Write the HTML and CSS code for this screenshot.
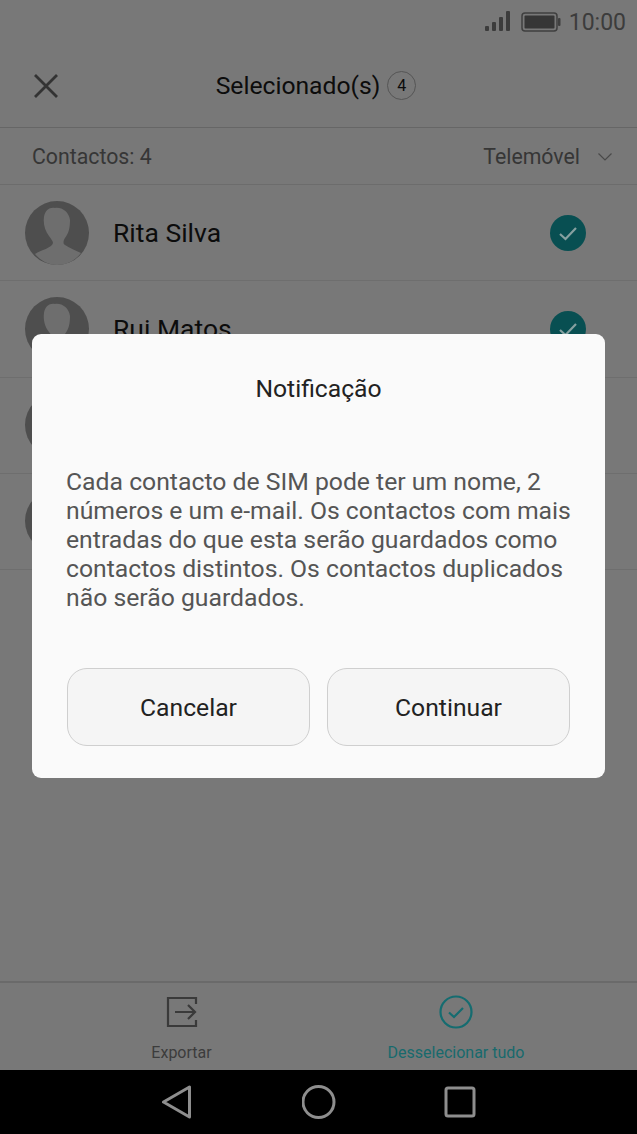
FILE: index.html
```html
<!DOCTYPE html>
<html lang="pt">
    <head>
        <meta charset="UTF-8" />
        <title>Selecionado(s)</title>
        <link rel="stylesheet" href="styles.css">
    </head>
    <body>
        <div class="screen">
            <div class="status">
                <svg class="signal" width="28" height="22" viewBox="0 0 28 22">
                    <rect x="1" y="16" width="4" height="5" rx="1" />
                    <rect x="8" y="12" width="4" height="9" rx="1" />
                    <rect x="15" y="7" width="4" height="14" rx="1" />
                    <rect x="22" y="1" width="4" height="20" rx="1" />
                </svg>
                <svg class="battery" width="40" height="20" viewBox="0 0 40 20">
                    <rect x="1" y="1" width="35" height="18" rx="3" fill="none" stroke="#3f3f3f" stroke-width="1.5" />
                    <rect x="3.5" y="3.5" width="30" height="13" rx="1" fill="#363636" />
                    <rect x="37" y="6" width="2.5" height="8" rx="1" fill="#3f3f3f" />
                </svg>
                <span class="time">10:00</span>
            </div>

            <div class="topbar">
                <svg class="close" width="26" height="26" viewBox="0 0 26 26">
                    <path d="M2 2 L24 24 M24 2 L2 24" />
                </svg>
                <span class="title">Selecionado(s)</span>
                <span class="count">4</span>
            </div>

            <div class="filter">
                <span>Contactos: 4</span>
                <span class="filter-type">
                    Telemóvel
                    <svg width="16" height="10" viewBox="0 0 16 10">
                        <path d="M1.5 1.5 L8 8 L14.5 1.5" />
                    </svg>
                </span>
            </div>

            <ul class="contacts">
                <li class="contact">
                    <svg class="avatar" viewBox="0 0 64 64">
                        <circle cx="32" cy="32" r="32" class="avatar-bg" />
                        <path class="avatar-fg" d="M10 53 C16 49 27 47 28 42 C28 40 26 38 24 35 C20 30 18 23 19 16 C20 9 25 6 30 7 C37 6 44 11 45 19 C45 26 44 32 40 37 C38 40 38 43 40 44 C44 47 50 49 56 52 C50 60 41 64 32 64 C24 64 16 60 10 53 Z" />
                    </svg>
                    <span class="name">Rita Silva</span>
                    <svg class="tick" viewBox="0 0 36 36">
                        <circle cx="18" cy="18" r="18" class="tick-bg" />
                        <path class="tick-mark" d="M10 19 L15.5 24 L26 13" />
                    </svg>
                </li>
                <li class="contact">
                    <svg class="avatar" viewBox="0 0 64 64">
                        <circle cx="32" cy="32" r="32" class="avatar-bg" />
                        <path class="avatar-fg" d="M10 53 C16 49 27 47 28 42 C28 40 26 38 24 35 C20 30 18 23 19 16 C20 9 25 6 30 7 C37 6 44 11 45 19 C45 26 44 32 40 37 C38 40 38 43 40 44 C44 47 50 49 56 52 C50 60 41 64 32 64 C24 64 16 60 10 53 Z" />
                    </svg>
                    <span class="name">Rui Matos</span>
                    <svg class="tick" viewBox="0 0 36 36">
                        <circle cx="18" cy="18" r="18" class="tick-bg" />
                        <path class="tick-mark" d="M10 19 L15.5 24 L26 13" />
                    </svg>
                </li>
                <li class="contact">
                    <svg class="avatar" viewBox="0 0 64 64">
                        <circle cx="32" cy="32" r="32" class="avatar-bg" />
                    </svg>
                </li>
                <li class="contact">
                    <svg class="avatar" viewBox="0 0 64 64">
                        <circle cx="32" cy="32" r="32" class="avatar-bg" />
                    </svg>
                </li>
            </ul>

            <div class="actions">
                <div class="action">
                    <svg width="34" height="34" viewBox="0 0 34 34">
                        <path class="export" d="M31 9 V3 H3 V31 H31 V25 M10 17 H30 M23 10 L30 17 L23 24" />
                    </svg>
                    <span>Exportar</span>
                </div>
                <div class="action action-on">
                    <svg width="34" height="34" viewBox="0 0 34 34">
                        <circle class="deselect" cx="17" cy="17" r="15.5" />
                        <path class="deselect" d="M10 17.5 L15 22 L24 13" />
                    </svg>
                    <span>Desselecionar tudo</span>
                </div>
            </div>

            <div class="nav">
                <svg width="34" height="34" viewBox="0 0 34 34">
                    <path d="M29.5 2 V32 L3.5 17 Z" />
                </svg>
                <svg width="34" height="34" viewBox="0 0 34 34">
                    <circle cx="16.5" cy="17" r="15.5" />
                </svg>
                <svg width="34" height="34" viewBox="0 0 34 34">
                    <rect x="2" y="3" width="28" height="28" rx="2" />
                </svg>
            </div>

            <div class="dialog">
                <h1>Notificação</h1>
                <p>Cada contacto de SIM pode ter um nome, 2 números e um e-mail. Os contactos com mais entradas do que esta serão guardados como contactos distintos. Os contactos duplicados não serão guardados.</p>
                <div class="buttons">
                    <button>Cancelar</button>
                    <button>Continuar</button>
                </div>
            </div>
        </div>
    </body>
</html>
```

FILE: styles.css
```css
* {
    box-sizing: border-box;
}

body {
    margin: 0;
    font-family: 'Roboto', 'Liberation Sans', sans-serif;
    background: #787878;
}

.screen {
    position: relative;
    display: flex;
    flex-direction: column;
    width: 637px;
    height: 1134px;
    overflow: hidden;
    background: #787878;
}

.status {
    display: flex;
    align-items: center;
    justify-content: flex-end;
    height: 44px;
    padding-right: 11px;
    color: #3c3c3c;
    font-size: 23px;
}

.signal {
    margin-right: 9px;
    margin-top: -3px;
    fill: #3c3c3c;
}

.battery {
    margin-right: 8px;
}

.topbar {
    display: flex;
    align-items: center;
    justify-content: center;
    position: relative;
    height: 84px;
    padding-right: 5px;
    border-bottom: 1px solid #666;
    color: #0c0c0c;
    font-size: 24.7px;
}

.close {
    position: absolute;
    left: 33px;
    top: 29px;
    fill: none;
    stroke: #333;
    stroke-width: 2.8;
}

.title {
    margin-right: 7px;
}

.count {
    display: flex;
    align-items: center;
    justify-content: center;
    width: 29px;
    height: 29px;
    border: 1px solid #555;
    border-radius: 50%;
    font-size: 16px;
}

.filter {
    display: flex;
    align-items: center;
    justify-content: space-between;
    height: 57px;
    padding: 1px 24px 0 32px;
    border-bottom: 1px solid #6c6c6c;
    color: #363636;
    font-size: 21.3px;
}

.filter-type {
    display: flex;
    align-items: center;
    gap: 17px;
}

.filter-type path {
    fill: none;
    stroke: #4a4a4a;
    stroke-width: 1.2;
}

.contacts {
    margin: 0;
    padding: 0;
    list-style: none;
}

.contact {
    display: flex;
    align-items: center;
    height: 96.25px;
    padding: 0 51px 0 25px;
    border-bottom: 1px solid #6e6e6e;
}

.avatar {
    flex: none;
    width: 64px;
    height: 64px;
}

.avatar-bg {
    fill: #4e4e4e;
}

.avatar-fg {
    fill: #6e6e6e;
}

.name {
    margin-left: 24px;
    color: #0c0c0c;
    font-size: 26.5px;
}

.tick {
    flex: none;
    width: 36px;
    height: 36px;
    margin-left: auto;
}

.tick-bg {
    fill: #084f52;
}

.tick-mark {
    fill: none;
    stroke: #86a0a0;
    stroke-width: 2.2;
}

.actions {
    display: grid;
    grid-template-columns: 275px 274px;
    margin-top: auto;
    height: 89px;
    padding: 12px 44px 0;
    border-top: 2px solid #6a6a6a;
    font-size: 16px;
    color: #3c3c3c;
}

.action {
    display: flex;
    flex-direction: column;
    align-items: center;
    gap: 14px;
}

.action-on {
    color: #176a6d;
}

.export {
    fill: none;
    stroke: #3a3a3a;
    stroke-width: 2.2;
}

.deselect {
    fill: none;
    stroke: #156c70;
    stroke-width: 2.2;
}

.nav {
    display: flex;
    align-items: center;
    justify-content: center;
    gap: 108px;
    height: 64px;
    background: #000;
}

.nav svg {
    fill: none;
    stroke: #8e8e8e;
    stroke-width: 3;
    stroke-linejoin: round;
}

.dialog {
    position: absolute;
    left: 32px;
    top: 334px;
    width: 573px;
    height: 444px;
    padding: 0 35px;
    border-radius: 9px;
    background: #fafafa;
}

.dialog h1 {
    margin: 39px 0 0;
    height: 32px;
    color: #222;
    font-size: 24.7px;
    font-weight: 400;
    line-height: 32px;
    text-align: center;
}

.dialog p {
    margin: 62px -6px 0 -1px;
    color: #555;
    font-size: 24.75px;
    line-height: 29px;
}

.buttons {
    display: grid;
    grid-template-columns: 243px 243px;
    gap: 17px;
    margin-top: 56px;
}

.buttons button {
    height: 78px;
    padding-top: 2px;
    border: 1px solid #cfcfcf;
    border-radius: 20px;
    background: #f5f5f5;
    color: #222;
    font: inherit;
    font-size: 24.7px;
}
```
